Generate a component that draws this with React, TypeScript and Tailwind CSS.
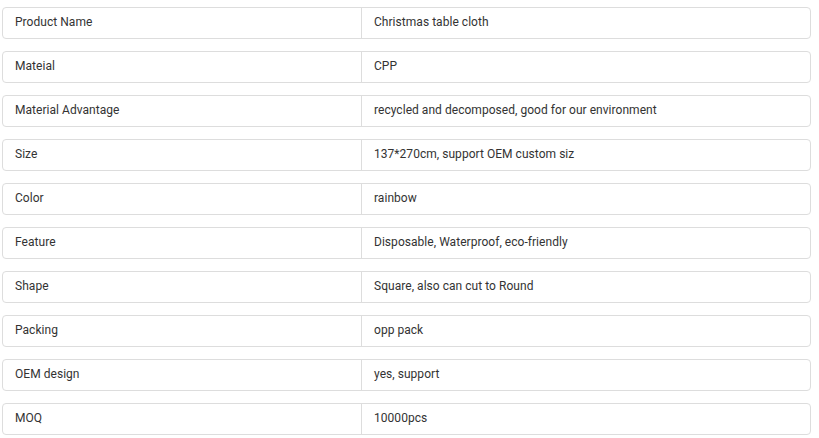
const rows = [
  ["Product Name", "Christmas table cloth"],
  ["Mateial", "CPP"],
  ["Material Advantage", "recycled and decomposed, good for our environment"],
  ["Size", "137*270cm, support OEM custom siz"],
  ["Color", "rainbow"],
  ["Feature", "Disposable, Waterproof, eco-friendly"],
  ["Shape", "Square, also can cut to Round"],
  ["Packing", "opp pack"],
  ["OEM design", "yes, support"],
  ["MOQ", "10000pcs"],
]

export default function App() {
  return (
    <div className="bg-white min-h-screen pt-[7px] pl-[2px] font-['Roboto',sans-serif]">
      <div className="w-[809px] flex flex-col gap-3">
        {rows.map(([label, value], i) => (
          <div key={i} className="flex h-[32px] border border-[#dddddd] rounded-[4px] text-[12px] tracking-[0.04px] text-[#333333]">
            <div className="w-[359px] shrink-0 border-r border-[#dddddd] px-3 pb-[2px] flex items-center">{label}</div>
            <div className="flex-1 px-3 pb-[2px] flex items-center">{value}</div>
          </div>
        ))}
      </div>
    </div>
  )
}
